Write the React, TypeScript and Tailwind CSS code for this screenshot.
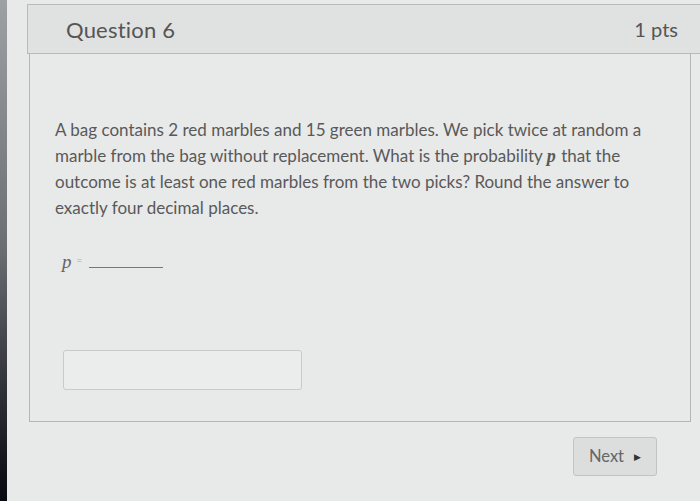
export default function App() {
  return (
    <div className="flex w-[700px] h-[501px] overflow-hidden bg-[#e8e9e9] font-['Lato',sans-serif] text-[#505050]">
      {/* screen bezel edge */}
      <div className="w-[7px] shrink-0 bg-gradient-to-b from-[#9ea1a4] via-[#6a6d72] to-[#07090f]" />

      <div className="flex flex-col flex-1 min-w-0 pl-[20px] pt-[4px]">
        {/* header */}
        <div className="flex items-center justify-between h-[50px] w-[690px] border-t border-l border-b border-[#b9baba] bg-[#e0e1e1] pl-[38px] pr-[39px]">
          <h2 className="text-[22px] text-[#555] tracking-[0.2px]">Question 6</h2>
          <span className="text-[20px] text-[#555]">1 pts</span>
        </div>

        {/* body */}
        <div className="ml-[2px] w-[662px] h-[368px] border-l border-r border-b border-[#b4b5b5] px-[25px] pt-[63px]">
          <p className="text-[17px] leading-[26px] text-[#595959] w-[610px]">
            A bag contains 2 red marbles and 15 green marbles. We pick twice at random a marble from the bag without
            replacement. What is the probability{" "}
            <i className="inline-block leading-[20px] font-['Liberation_Serif',serif] font-bold text-[18px] pr-[1px]">p</i>{" "}
            that the outcome is at least one red marbles from the two picks? Round the answer to exactly four decimal
            places.
          </p>

          <div className="flex items-end mt-[28px] ml-[7px] h-[22px]">
            <i className="font-['Liberation_Serif',serif] text-[19px] text-[#666] leading-none">p</i>
            <span className="text-[10px] text-[#aaa] ml-[5px] mb-[6px] leading-none">=</span>
            <span className="ml-[7px] mb-[3px] w-[74px] border-b border-[#777]" />
          </div>

          <div className="mt-[79px] ml-[8px] w-[239px] h-[40px] border border-[#c9caca] rounded-[3px] bg-[#ebecec]" />
        </div>

        {/* footer */}
        <div className="flex justify-end w-[664px] pr-[34px] pt-[15px]">
          <button className="flex items-center gap-[10px] h-[39px] w-[84px] justify-center border border-[#c2c3c3] rounded-[3px] bg-[#dcdddd] text-[16.5px] text-[#666]">
            Next
            <span className="text-[9px] text-[#333]">▶</span>
          </button>
        </div>
      </div>
    </div>
  );
}
